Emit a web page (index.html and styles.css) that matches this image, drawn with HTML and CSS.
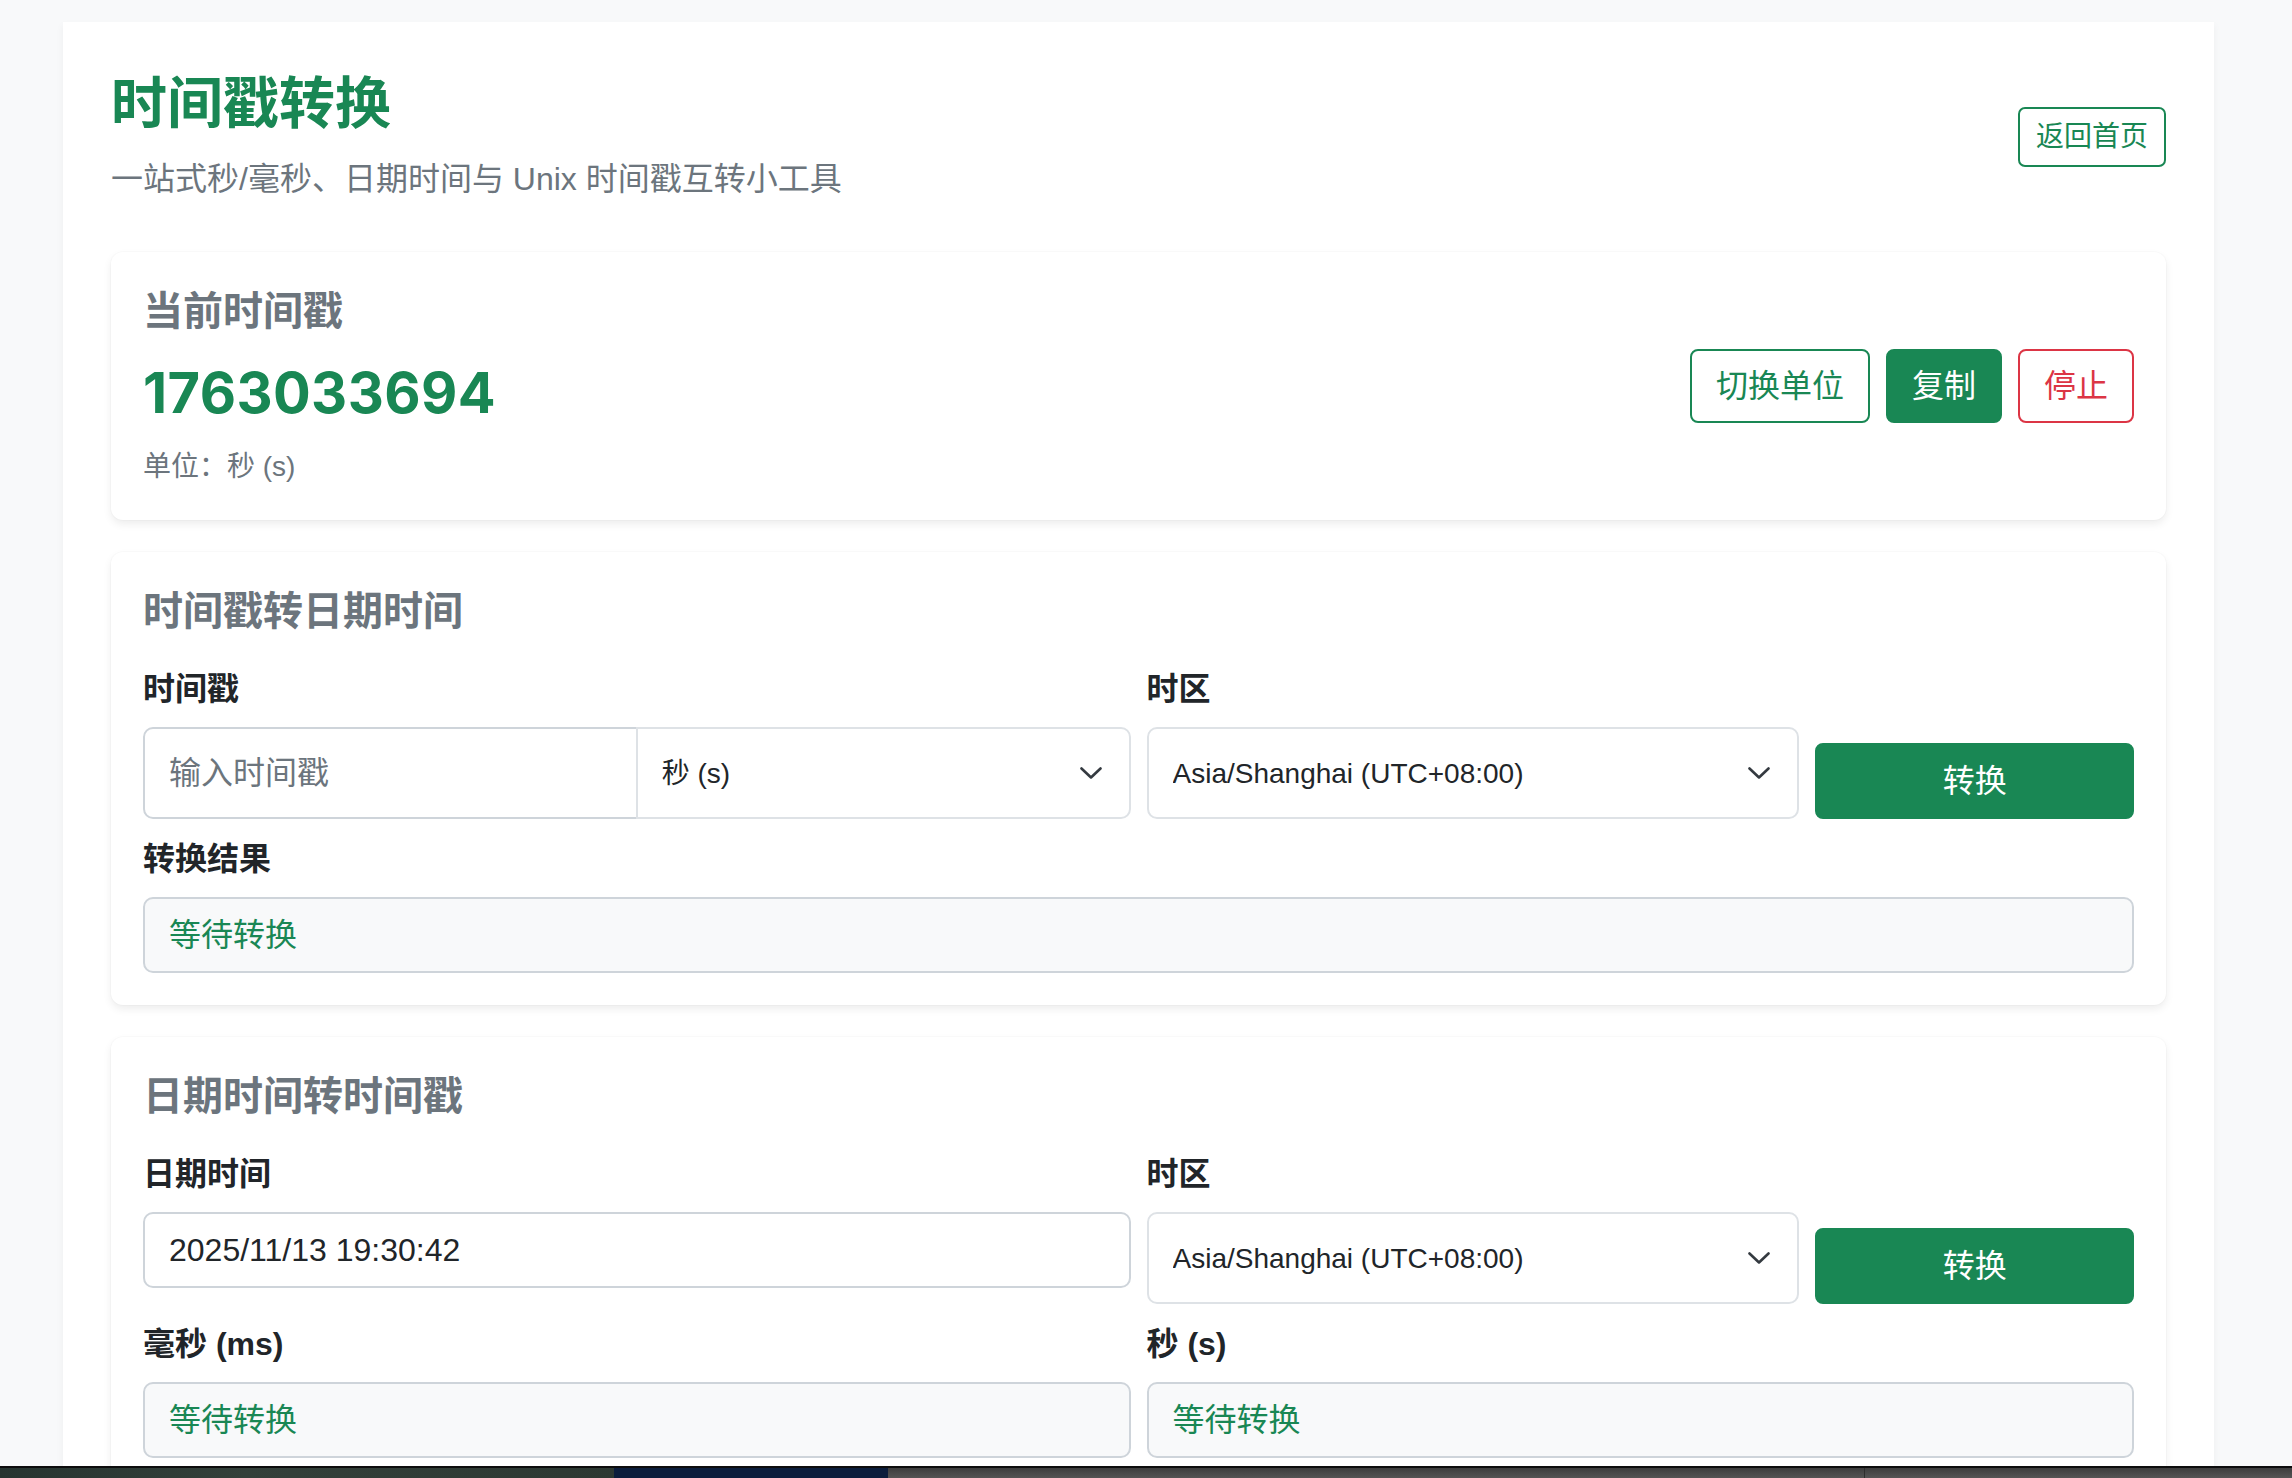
FILE: index.html
```html
<!DOCTYPE html>
<html lang="zh-CN">
<head>
<meta charset="utf-8">
<title>时间戳转换</title>
<link rel="stylesheet" href="styles.css">
</head>
<body>
<main class="page">
  <header class="page-head">
    <div class="page-head-text">
      <h1 class="page-title">时间戳转换</h1>
      <p class="page-sub">一站式秒/毫秒、日期时间与 Unix 时间戳互转小工具</p>
    </div>
    <a class="btn btn-sm btn-outline-success" href="#">返回首页</a>
  </header>

  <section class="panel panel-now">
    <div class="now-info">
      <h2 class="panel-title panel-title-now">当前时间戳</h2>
      <div class="now-value">1763033694</div>
      <div class="now-unit">单位：秒 (s)</div>
    </div>
    <div class="btn-row">
      <button class="btn btn-outline-success" type="button">切换单位</button>
      <button class="btn btn-success" type="button">复制</button>
      <button class="btn btn-outline-danger" type="button">停止</button>
    </div>
  </section>

  <section class="panel">
    <h2 class="panel-title">时间戳转日期时间</h2>
    <div class="form-grid">
      <div class="field">
        <label class="field-label">时间戳</label>
        <div class="input-group">
          <input class="control control-grouped" type="text" placeholder="输入时间戳">
          <div class="select-wrap select-grouped">
            <select class="select">
              <option>秒 (s)</option>
              <option>毫秒 (ms)</option>
            </select>
            <svg class="chevron" viewBox="0 0 22 12" width="22" height="12" aria-hidden="true"><path d="M1.5 1.5 11 10.5 20.5 1.5" fill="none" stroke="#343a40" stroke-width="2.6" stroke-linecap="round" stroke-linejoin="round"/></svg>
          </div>
        </div>
      </div>
      <div class="field">
        <label class="field-label">时区</label>
        <div class="select-wrap">
          <select class="select">
            <option>Asia/Shanghai (UTC+08:00)</option>
          </select>
          <svg class="chevron" viewBox="0 0 22 12" width="22" height="12" aria-hidden="true"><path d="M1.5 1.5 11 10.5 20.5 1.5" fill="none" stroke="#343a40" stroke-width="2.6" stroke-linecap="round" stroke-linejoin="round"/></svg>
        </div>
      </div>
      <div class="field field-action">
        <button class="btn btn-success btn-block" type="button">转换</button>
      </div>
    </div>
    <div class="field result-row">
      <label class="field-label">转换结果</label>
      <div class="result">等待转换</div>
    </div>
  </section>

  <section class="panel">
    <h2 class="panel-title">日期时间转时间戳</h2>
    <div class="form-grid">
      <div class="field">
        <label class="field-label">日期时间</label>
        <input class="control control-date" type="text" value="2025/11/13 19:30:42">
      </div>
      <div class="field">
        <label class="field-label">时区</label>
        <div class="select-wrap">
          <select class="select">
            <option>Asia/Shanghai (UTC+08:00)</option>
          </select>
          <svg class="chevron" viewBox="0 0 22 12" width="22" height="12" aria-hidden="true"><path d="M1.5 1.5 11 10.5 20.5 1.5" fill="none" stroke="#343a40" stroke-width="2.6" stroke-linecap="round" stroke-linejoin="round"/></svg>
        </div>
      </div>
      <div class="field field-action">
        <button class="btn btn-success btn-block" type="button">转换</button>
      </div>
    </div>
    <div class="two-col result-row">
      <div class="field">
        <label class="field-label">毫秒 (ms)</label>
        <div class="result">等待转换</div>
      </div>
      <div class="field">
        <label class="field-label">秒 (s)</label>
        <div class="result">等待转换</div>
      </div>
    </div>
  </section>
</main>

<div class="dock-strip" aria-hidden="true">
  <div class="dock-seg dock-seg-a"></div>
  <div class="dock-seg dock-seg-b"></div>
  <div class="dock-seg dock-seg-c"></div>
  <div class="dock-seg dock-seg-d"></div>
</div>
</body>
</html>
```

FILE: styles.css
```css
* {
  box-sizing: border-box;
}

html,
body {
  margin: 0;
  padding: 0;
}

body {
  background: #f8f9fa;
  color: #212529;
  font-family: "Liberation Sans", "Noto Sans CJK SC", sans-serif;
  font-size: 32px;
  line-height: 1.5;
}

/* outer sheet */
.page {
  margin: 22px 78px 0 63px;
  padding: 48px;
  background: #fff;
  box-shadow: 0 4px 8px rgba(0, 0, 0, 0.05);
}

.page-head {
  display: flex;
  justify-content: space-between;
  align-items: center;
  margin-bottom: 49px;
}

.page-title {
  margin: 0;
  font-size: 56px;
  line-height: 67px;
  font-weight: 700;
  color: #198754;
}

.page-sub {
  margin: 18px 0 0;
  font-size: 32px;
  line-height: 48px;
  color: #6c757d;
}

/* cards */
.panel {
  background: #fff;
  border-radius: 12px;
  padding: 32px;
  margin-bottom: 32px;
  box-shadow: 0 4px 8px rgba(0, 0, 0, 0.075), 0 0 0 1px rgba(0, 0, 0, 0.015);
}

.panel-title {
  margin: 0 0 26px;
  padding-top: 3px;
  font-size: 40px;
  line-height: 48px;
  font-weight: 600;
  color: #6c757d;
}

.panel-now {
  display: flex;
  justify-content: space-between;
  align-items: center;
}

.panel-title-now {
  margin-bottom: 25px;
}

.now-value {
  font-family: "Inter", "Liberation Sans", sans-serif;
  font-size: 56px;
  line-height: 67px;
  font-weight: 700;
  letter-spacing: 0.4px;
  color: #198754;
}

.now-unit {
  margin-top: 19px;
  font-size: 28px;
  line-height: 42px;
  color: #6c757d;
}

.btn-row {
  display: flex;
  gap: 16px;
}

/* buttons */
.btn {
  display: inline-flex;
  align-items: center;
  justify-content: center;
  padding: 11px 24px;
  border: 2px solid transparent;
  border-radius: 8px;
  background: transparent;
  font-family: inherit;
  font-size: 32px;
  line-height: 48px;
  text-decoration: none;
  cursor: pointer;
  white-space: nowrap;
}

.btn-sm {
  padding: 7px 16px;
  font-size: 28px;
  line-height: 42px;
  border-radius: 7px;
}

.btn-outline-success {
  color: #198754;
  border-color: #198754;
  background: #fff;
}

.btn-success {
  color: #fff;
  background: #198754;
  border-color: #198754;
}

.btn-outline-danger {
  color: #dc3545;
  border-color: #dc3545;
  background: #fff;
}

.btn-block {
  width: 100%;
  padding: 12px 16px;
}

/* form layout */
.form-grid {
  display: grid;
  grid-template-columns: calc(50% - 8px) calc(33.333% - 10.667px) 1fr;
  column-gap: 16px;
  align-items: start;
}

.two-col {
  display: grid;
  grid-template-columns: 1fr 1fr;
  column-gap: 16px;
}

.result-row {
  margin-top: 12px;
}

.field {
  display: flex;
  flex-direction: column;
  min-width: 0;
}

.field-label {
  display: block;
  margin-bottom: 14px;
  padding-top: 4px;
  font-size: 32px;
  line-height: 48px;
  font-weight: 700;
  color: #212529;
}

.input-group {
  display: flex;
  height: 92px;
}

.control {
  display: block;
  width: 100%;
  height: 76px;
  padding: 0 24px;
  border: 2px solid #ced4da;
  border-radius: 10px;
  background: #fff;
  color: #212529;
  font-family: inherit;
  font-size: 32px;
  outline: none;
}

.control::placeholder {
  color: #6c757d;
}

.control-grouped {
  flex: 1 1 50%;
  height: 92px;
  border-radius: 10px 0 0 10px;
  min-width: 0;
}

.select-wrap {
  position: relative;
}

.select-grouped {
  flex: 1 1 50%;
  margin-left: -2px;
  min-width: 0;
}

.select {
  display: block;
  width: 100%;
  height: 92px;
  padding: 0 64px 0 24px;
  border: 2px solid #dee2e6;
  border-radius: 10px;
  background: #fff;
  color: #212529;
  font-family: inherit;
  font-size: 28px;
  -webkit-appearance: none;
  appearance: none;
  outline: none;
}

.select-grouped .select {
  border-radius: 0 10px 10px 0;
}

.chevron {
  position: absolute;
  right: 29px;
  top: 50%;
  margin-top: -6px;
  pointer-events: none;
}

.field-action {
  align-self: end;
}

.result {
  height: 76px;
  padding: 12px 24px;
  border: 2px solid #ced4da;
  border-radius: 10px;
  background: #f8f9fa;
  color: #198754;
  font-size: 32px;
  line-height: 48px;
}

/* desktop strip along the bottom edge */
.dock-strip {
  position: fixed;
  left: 0;
  right: 0;
  bottom: 0;
  height: 12px;
  display: flex;
  border-top: 2px solid #0d0d0d;
}

.dock-seg {
  height: 100%;
}

.dock-seg-a {
  width: 614px;
  background: linear-gradient(90deg, #263430, #33403a 40%, #2c3832);
}

.dock-seg-b {
  width: 274px;
  background: #0b1d3c;
}

.dock-seg-c {
  width: 977px;
  background: linear-gradient(180deg, #3d3d3d, #545454);
  border-right: 1px solid #2e2e2e;
}

.dock-seg-d {
  flex: 1;
  background: linear-gradient(180deg, #3d3d3d, #555);
}
```
